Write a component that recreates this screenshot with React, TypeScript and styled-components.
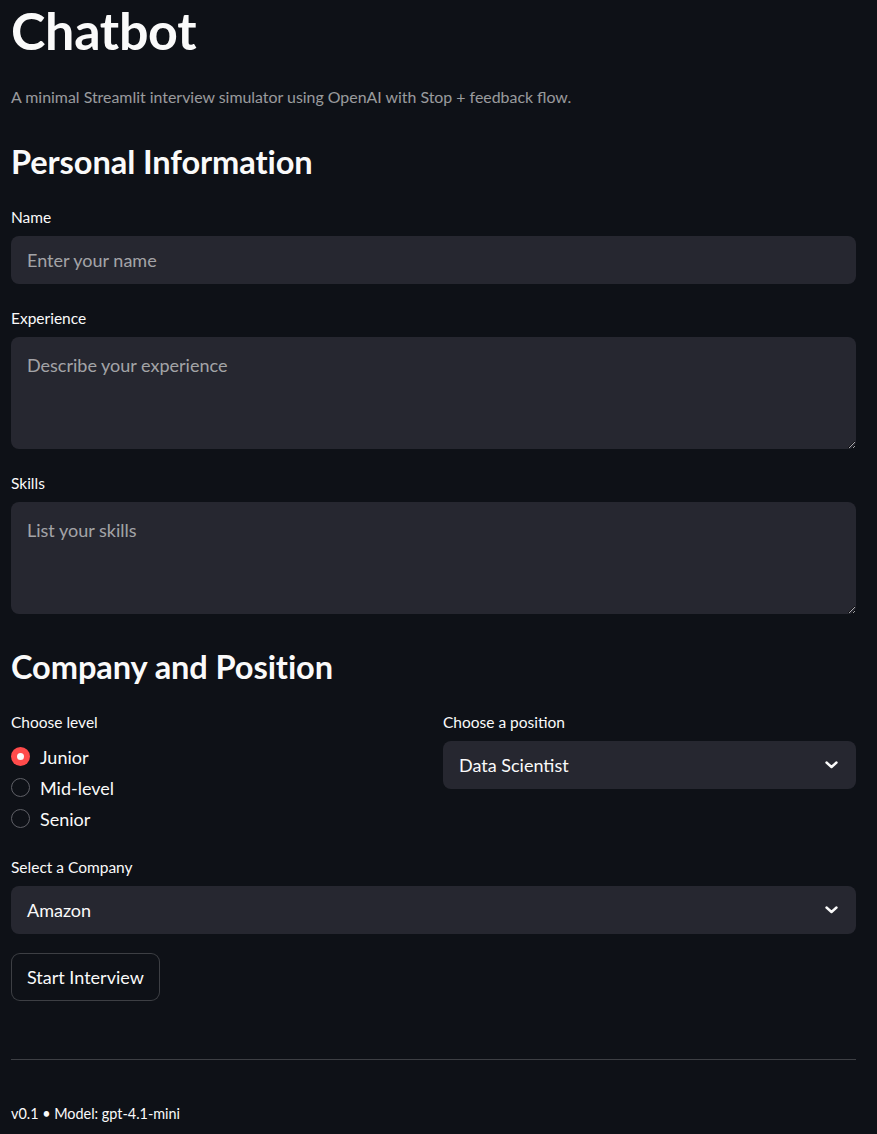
import React from "react";
import styled, { createGlobalStyle } from "styled-components";

const GlobalStyle = createGlobalStyle`
  html, body {
    margin: 0;
    padding: 0;
    background: #0e1117;
    color: #fafafa;
    font-family: Lato, "Noto Sans", sans-serif;
    color-scheme: dark;
  }
  * { box-sizing: border-box; }
`;

const Page = styled.main`
  padding: 0 21px 0 11px;
  display: flex;
  flex-direction: column;
`;

const Title = styled.h1`
  margin: 0;
  font-size: 52px;
  line-height: 60px;
  font-weight: 700;
  letter-spacing: -0.3px;
`;

const Caption = styled.p`
  margin: 25px 0 0;
  font-size: 15.9px;
  line-height: 24px;
  color: rgba(250, 250, 250, 0.6);
`;

const Header = styled.h2<{ $top: number }>`
  margin: ${(p) => p.$top}px 0 0;
  font-size: 32.6px;
  line-height: 40px;
  font-weight: 700;
  letter-spacing: -0.1px;
`;

const Field = styled.div<{ $top: number }>`
  margin-top: ${(p) => p.$top}px;
  display: flex;
  flex-direction: column;
  gap: 8px;
`;

const Label = styled.label`
  font-size: 15.5px;
  line-height: 22px;
  color: #fafafa;
`;

const Input = styled.input`
  height: 48px;
  border: none;
  outline: none;
  border-radius: 8px;
  background: #262730;
  color: #fafafa;
  padding: 0 16px;
  font-family: inherit;
  font-size: 18px;
  &::placeholder { color: rgba(250, 250, 250, 0.6); }
`;

const TextArea = styled.textarea`
  height: 112px;
  border: none;
  outline: none;
  border-radius: 8px;
  background: #262730;
  color: #fafafa;
  padding: 15px 16px 10px;
  font-family: inherit;
  font-size: 18px;
  line-height: 27px;
  resize: vertical;
  &::placeholder { color: rgba(250, 250, 250, 0.6); }
`;

const Columns = styled.div`
  margin-top: 24px;
  display: grid;
  grid-template-columns: 1fr 1fr;
  column-gap: 19px;
`;

const RadioGroup = styled.div`
  display: flex;
  flex-direction: column;
`;

const RadioRow = styled.div`
  height: 31px;
  display: flex;
  align-items: center;
  gap: 10px;
  font-size: 18px;
`;

const RadioDot = styled.span<{ $checked?: boolean }>`
  width: 19px;
  height: 19px;
  border-radius: 50%;
  flex: none;
  display: flex;
  align-items: center;
  justify-content: center;
  background: ${(p) => (p.$checked ? "#ff4b4b" : "#0e1117")};
  border: ${(p) => (p.$checked ? "none" : "1.5px solid #5f6067")};
  &::after {
    content: "";
    display: ${(p) => (p.$checked ? "block" : "none")};
    width: 7px;
    height: 7px;
    border-radius: 50%;
    background: #fafafa;
  }
`;

const Select = styled.div`
  height: 48px;
  border-radius: 8px;
  background: #262730;
  display: flex;
  align-items: center;
  justify-content: space-between;
  padding: 0 18px 0 16px;
  font-size: 18px;
  color: #fafafa;
`;

const Button = styled.button`
  align-self: flex-start;
  margin-top: 19px;
  height: 48px;
  padding: 0 15px;
  border-radius: 9px;
  border: 1px solid rgba(250, 250, 250, 0.2);
  background: #0e1117;
  color: #fafafa;
  font-family: inherit;
  font-size: 18px;
`;

const Divider = styled.hr`
  margin: 58px 0 0;
  border: none;
  border-top: 1px solid rgba(250, 250, 250, 0.2);
`;

const Footer = styled.div`
  margin-top: 43px;
  font-size: 14.4px;
  line-height: 22px;
  padding-bottom: 10px;
`;

const Chevron = () => (
  <svg width="13" height="8" viewBox="0 0 13 8" fill="none">
    <path d="M1.5 1.5 L6.5 6 L11.5 1.5" stroke="#fafafa" strokeWidth="2.4" strokeLinecap="round" strokeLinejoin="round" />
  </svg>
);

export default function App() {
  return (
    <>
      <GlobalStyle />
      <Page>
        <Title>Chatbot</Title>
        <Caption>A minimal Streamlit interview simulator using OpenAI with Stop + feedback flow.</Caption>

        <Header $top={33}>Personal Information</Header>
        <Field $top={24}>
          <Label>Name</Label>
          <Input placeholder="Enter your name" />
        </Field>
        <Field $top={23}>
          <Label>Experience</Label>
          <TextArea placeholder="Describe your experience" />
        </Field>
        <Field $top={23}>
          <Label>Skills</Label>
          <TextArea placeholder="List your skills" />
        </Field>

        <Header $top={33}>Company and Position</Header>
        <Columns>
          <Field $top={0}>
            <Label>Choose level</Label>
            <RadioGroup>
              <RadioRow><RadioDot $checked />Junior</RadioRow>
              <RadioRow><RadioDot />Mid-level</RadioRow>
              <RadioRow><RadioDot />Senior</RadioRow>
            </RadioGroup>
          </Field>
          <Field $top={0}>
            <Label>Choose a position</Label>
            <Select>Data Scientist<Chevron /></Select>
          </Field>
        </Columns>
        <Field $top={22}>
          <Label>Select a Company</Label>
          <Select>Amazon<Chevron /></Select>
        </Field>
        <Button>Start Interview</Button>
        <Divider />
        <Footer>v0.1 • Model: gpt-4.1-mini</Footer>
      </Page>
    </>
  );
}
